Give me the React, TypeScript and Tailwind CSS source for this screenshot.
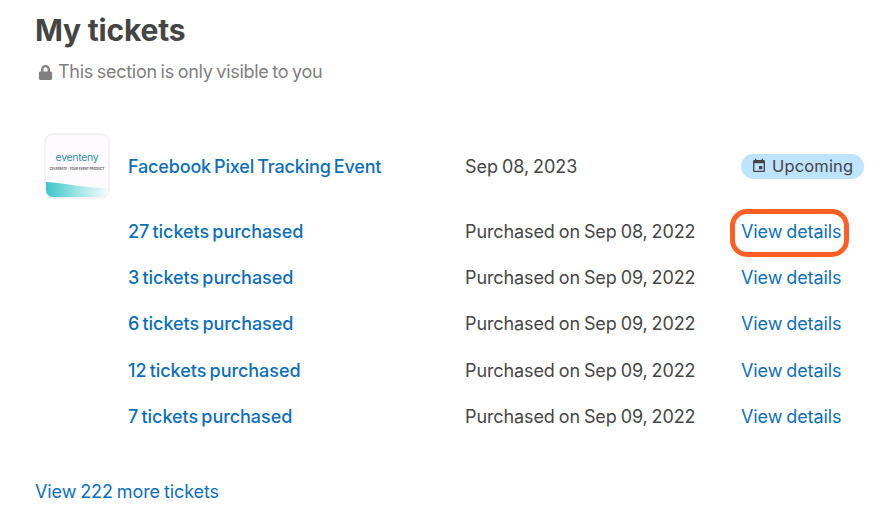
import { FaLock } from "react-icons/fa";
import { MdEvent } from "react-icons/md";

const rows = [
  { count: 27, date: "Sep 08, 2022" },
  { count: 3, date: "Sep 09, 2022" },
  { count: 6, date: "Sep 09, 2022" },
  { count: 12, date: "Sep 09, 2022" },
  { count: 7, date: "Sep 09, 2022" },
];

function EventLogo() {
  return (
    <div className="relative h-[66px] w-[66px] overflow-hidden rounded-[9px] border-2 border-[#f3f3f3] bg-[#fdfbfd]">
      <div className="mt-[16px] text-center text-[10.5px] leading-[13px] tracking-[-0.3px] text-[#2f8fa3]">eventeny</div>
      <div className="mt-[3px] whitespace-nowrap text-center text-[3px] leading-[4px] font-bold text-[#666]">
        CELEBRATE · YOUR EVENT PRODUCT
      </div>
      <svg className="absolute bottom-0 left-0 h-[16px] w-full" viewBox="0 0 66 16" preserveAspectRatio="none">
        <defs>
          <linearGradient id="wave" x1="0" x2="1" y1="0" y2="0">
            <stop offset="0" stopColor="#3cc6ca" />
            <stop offset="0.55" stopColor="#a5e6e6" />
            <stop offset="1" stopColor="#f3fbfb" />
          </linearGradient>
        </defs>
        <path d="M0 1 C 20 2, 40 7, 66 7 L66 16 L0 16 Z" fill="url(#wave)" />
      </svg>
    </div>
  );
}

export default function App() {
  return (
    <div className="h-[518px] w-[882px] overflow-hidden bg-white pl-9 font-['Inter',sans-serif]">
      {/* Header */}
      <h1 className="-ml-px pt-[12px] text-[30px] leading-[37px] font-bold tracking-[-0.2px] text-[#454545]">My tickets</h1>
      <div className="mt-[11px] flex items-center gap-[5px] text-[18px] leading-[24px] tracking-[-0.28px] [word-spacing:-1px] text-[#808080]">
        <FaLock size={15} className="ml-[2px] shrink-0" />
        This section is only visible to you
      </div>

      {/* Event row */}
      <div className="mt-[49px] grid grid-cols-[92px_338px_275px_1fr] items-center">
        <div className="pl-2">
          <EventLogo />
        </div>
        <a className="text-[18px] font-medium tracking-[-0.17px] [word-spacing:-1.5px] text-[#0b6fbb]">Facebook Pixel Tracking Event</a>
        <div className="-ml-px text-[18px] tracking-[-0.05px] [word-spacing:-1px] text-[#454545]">Sep 08, 2023</div>
        <div className="flex h-[25px] w-[123px] items-center gap-[5px] rounded-full bg-[#bde3ff] pl-[10px] text-[16.5px] tracking-[0.15px] text-[#454545]">
          <MdEvent size={16} className="shrink-0" />
          Upcoming
        </div>
      </div>

      {/* Purchases */}
      <div className="mt-[19px] flex flex-col gap-[18.2px]">
        {rows.map((r, i) => (
          <div key={i} className="grid h-[28px] grid-cols-[92px_338px_275px_1fr] items-center text-[18px] leading-[28px]">
            <div />
            <a className="font-medium tracking-[-0.05px] [word-spacing:-1.5px] text-[#0b6fbb]">{r.count} tickets purchased</a>
            <div className="-ml-px tracking-[-0.1px] [word-spacing:-1px] text-[#454545]">Purchased on {r.date}</div>
            <div className="relative w-fit tracking-[-0.1px] [word-spacing:-1px] text-[#0b6fbb]">
              View details
              {i === 0 && (
                <div className="absolute -top-[9px] -right-[8px] -bottom-[11px] -left-[11px] rounded-[17px] border-[5px] border-[#ff5f24]" />
              )}
            </div>
          </div>
        ))}
      </div>

      <a className="mt-[47px] block -ml-px text-[18px] tracking-[-0.1px] [word-spacing:-1px] text-[#0b6fbb]">View 222 more tickets</a>
    </div>
  );
}
